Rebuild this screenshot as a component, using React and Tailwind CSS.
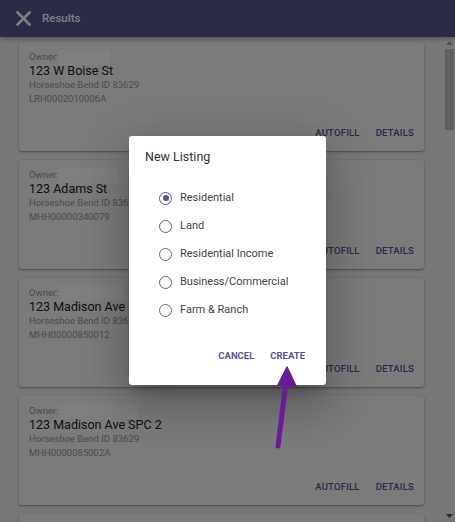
import React from "react";

const cards = [
  { box: 52, addr: "123 W Boise St", city: "Horseshoe Bend ID 83629", id: "LRH0002010006A" },
  { box: 60, addr: "123 Adams St", city: "Horseshoe Bend ID 83629", id: "MHH00000340079" },
  { box: 66, addr: "123 Madison Ave", city: "Horseshoe Bend ID 83629", id: "MHH00000850012" },
  { box: 80, addr: "123 Madison Ave SPC 2", city: "Horseshoe Bend ID 83629", id: "MHH0000085002A" },
];

const options = ["Residential", "Land", "Residential Income", "Business/Commercial", "Farm & Ranch"];

const cardCls =
  "h-[109px] shrink-0 rounded-[3px] bg-[#f6f6f6] shadow-[0_1px_3px_rgba(0,0,0,0.25),0_1px_1px_rgba(0,0,0,0.15)] flex flex-col px-[10px] pt-[8px] pb-[6px]";

function Card({ c }) {
  return (
    <div className={cardCls}>
      <div className="flex items-center h-[14px] text-[9.5px] text-[#9a9a9a] leading-[14px]">
        <span>Owner:</span>
        <span className="h-[15px] bg-white inline-block" style={{ width: c.box }} />
      </div>
      <div className="h-[14px] leading-[14px] text-[12.5px] text-[#222]">{c.addr}</div>
      <div className="h-[14px] leading-[14px] text-[9.5px] text-[#9a9a9a]">{c.city}</div>
      <div className="h-[14px] leading-[14px] text-[9.5px] text-[#9a9a9a]">{c.id}</div>
      <div className="flex-1" />
      <div className="flex justify-end items-center h-[24px] -mr-[8px] text-[9.5px] font-medium tracking-[0.2px] text-[#58529a]">
        <span className="px-[8px]">AUTOFILL</span>
        <span className="px-[8px]">DETAILS</span>
      </div>
    </div>
  );
}

function Radio({ checked }) {
  return (
    <span
      className={
        "w-[13px] h-[13px] rounded-full border-[1.8px] flex items-center justify-center shrink-0 " +
        (checked ? "border-[#58529a]" : "border-[#6e6e6e]")
      }
    >
      {checked && <span className="w-[6px] h-[6px] rounded-full bg-[#58529a]" />}
    </span>
  );
}

export default function App() {
  return (
    <div className="relative w-[455px] h-[522px] overflow-hidden bg-[#f0f0f0] flex flex-col" style={{ fontFamily: "Roboto, 'Liberation Sans', sans-serif" }}>
      <div className="h-[37px] shrink-0 bg-[#57548f] flex items-center pl-[16px] shadow-[0_2px_4px_rgba(0,0,0,0.3)] z-10">
        <svg width="15" height="15" viewBox="0 0 15 15" className="shrink-0">
          <path d="M1.5 1.5 L13.5 13.5 M13.5 1.5 L1.5 13.5" stroke="white" strokeWidth="2.6" strokeLinecap="square" />
        </svg>
        <span className="ml-[11px] text-[11.5px] font-medium text-white">Results</span>
      </div>
      <div className="flex-1 flex min-h-0">
        <div className="flex-1 overflow-hidden pl-[19px] pr-[20px] pt-[5px] flex flex-col gap-[9px]">
          {cards.map((c, i) => (
            <Card key={i} c={c} />
          ))}
          <div className={cardCls} />
        </div>
        <div className="w-[11px] shrink-0 bg-[#f1f1f1] flex flex-col items-center">
          <div className="h-[12px] flex items-center justify-center">
            <svg width="7" height="4" viewBox="0 0 7 4"><path d="M0 4 L3.5 0 L7 4 Z" fill="#a3a3a3" /></svg>
          </div>
          <div className="w-[9px] h-[81px] bg-[#c1c1c1]" />
          <div className="flex-1" />
          <div className="h-[12px] flex items-center justify-center">
            <svg width="7" height="4" viewBox="0 0 7 4"><path d="M0 0 L3.5 4 L7 0 Z" fill="#505050" /></svg>
          </div>
        </div>
      </div>

      <div className="absolute inset-0 bg-black/50 z-20" />

      <div className="absolute left-[129px] top-[136px] w-[197px] h-[249px] bg-white rounded-[3px] z-30 shadow-[0_11px_15px_-7px_rgba(0,0,0,0.2),0_24px_38px_3px_rgba(0,0,0,0.14),0_9px_46px_8px_rgba(0,0,0,0.12)] flex flex-col">
        <div className="pl-[16px] pt-[13px] h-[33px] text-[12.5px] leading-[16px] text-[#333]">New Listing</div>
        <div className="pl-[30px] pt-[15px] flex flex-col">
          {options.map((o, i) => (
            <div key={o} className="h-[28px] flex items-center gap-[8px]">
              <Radio checked={i === 0} />
              <span className="text-[11px] text-[#444]">{o}</span>
            </div>
          ))}
        </div>
        <div className="flex-1" />
        <div className="flex justify-end items-center h-[28px] pr-[13px] mb-[15px] text-[9.5px] font-bold text-[#58529a]">
          <span className="px-[8px]">CANCEL</span>
          <span className="px-[8px]">CREATE</span>
        </div>
      </div>

      <svg className="absolute left-0 top-0 z-40 pointer-events-none" width="455" height="522" viewBox="0 0 455 522">
        <path d="M286 382 L278 446" stroke="#6a1b9a" strokeWidth="5" strokeLinecap="round" />
        <path d="M287 367 L296 386 L278 385 Z" fill="#6a1b9a" stroke="#6a1b9a" strokeWidth="1.5" strokeLinejoin="round" />
      </svg>
    </div>
  );
}
